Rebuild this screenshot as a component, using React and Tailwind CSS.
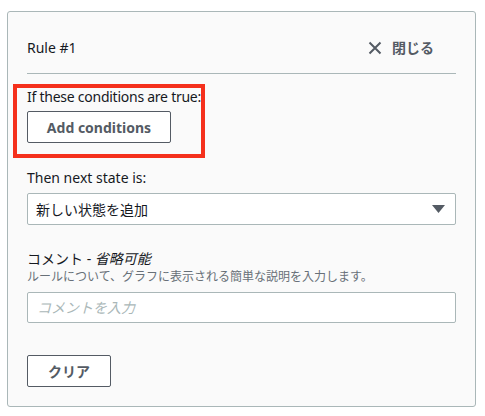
import React from "react";

const font = {
  fontFamily: '"Noto Sans", "Noto Sans CJK JP", sans-serif',
};

const CloseIcon = () => (
  <svg width="14" height="14" viewBox="0 0 14 14" fill="none">
    <path d="M1.5 1.5 L12.5 12.5 M12.5 1.5 L1.5 12.5" stroke="#545b64" strokeWidth="2" />
  </svg>
);

const App = () => {
  return (
    <div className="w-[485px] h-[416px] bg-white pt-[11px] px-[7px]" style={font}>
      <div className="w-[469px] h-[396px] border border-[#aab7b8] rounded-[3px] bg-[#fafafa] px-[19px] text-[14px] text-[#16191f]">
        {/* header */}
        <div className="pt-[18px]">
          <div className="h-[36px] flex items-center justify-between">
            <span className="leading-[20px]">Rule #1</span>
            <button className="flex items-center gap-[10px] mr-[22px] text-[#545b64] font-bold leading-[20px]">
              <CloseIcon />
              <span>閉じる</span>
            </button>
          </div>
          <div className="mt-[7px] h-px bg-[#aab7b8]" />
        </div>

        {/* highlighted conditions block */}
        <div className="mt-[10px] ml-[-14px] w-[192px] border-4 border-[#f5301c] pl-[10px] pb-[11px]">
          <p className="leading-[18px] whitespace-nowrap tracking-[-0.25px]">If these conditions are true:</p>
          <button className="mt-[5px] w-[144px] h-[32px] border border-[#545b64] rounded-[2px] bg-white text-[#545b64] font-bold">
            Add conditions
          </button>
        </div>

        {/* next state */}
        <p className="mt-[10px] leading-[20px]">Then next state is:</p>
        <div className="mt-[5px] h-[32px] border border-[#aab7b8] rounded-[2px] bg-white flex items-center justify-between pl-[8px] pr-[10px]">
          <span>新しい状態を追加</span>
          <svg width="13" height="8" viewBox="0 0 13 8">
            <path d="M0 0 H13 L6.5 8 Z" fill="#545b64" />
          </svg>
        </div>

        {/* comment */}
        <p className="mt-[24px] leading-[20px]">
          コメント - <i>省略可能</i>
        </p>
        <p className="text-[12px] leading-[16px] text-[#687078]">
          ルールについて、グラフに表示される簡単な説明を入力します。
        </p>
        <div className="mt-[7px] h-[31px] border border-[#aab7b8] rounded-[2px] bg-white flex items-center pl-[9px]">
          <span className="italic text-[#aab7b8]">コメントを入力</span>
        </div>

        <button className="mt-[32px] w-[84px] h-[32px] border border-[#545b64] rounded-[2px] bg-white text-[#545b64] font-bold">
          クリア
        </button>
      </div>
    </div>
  );
};

export default App;
